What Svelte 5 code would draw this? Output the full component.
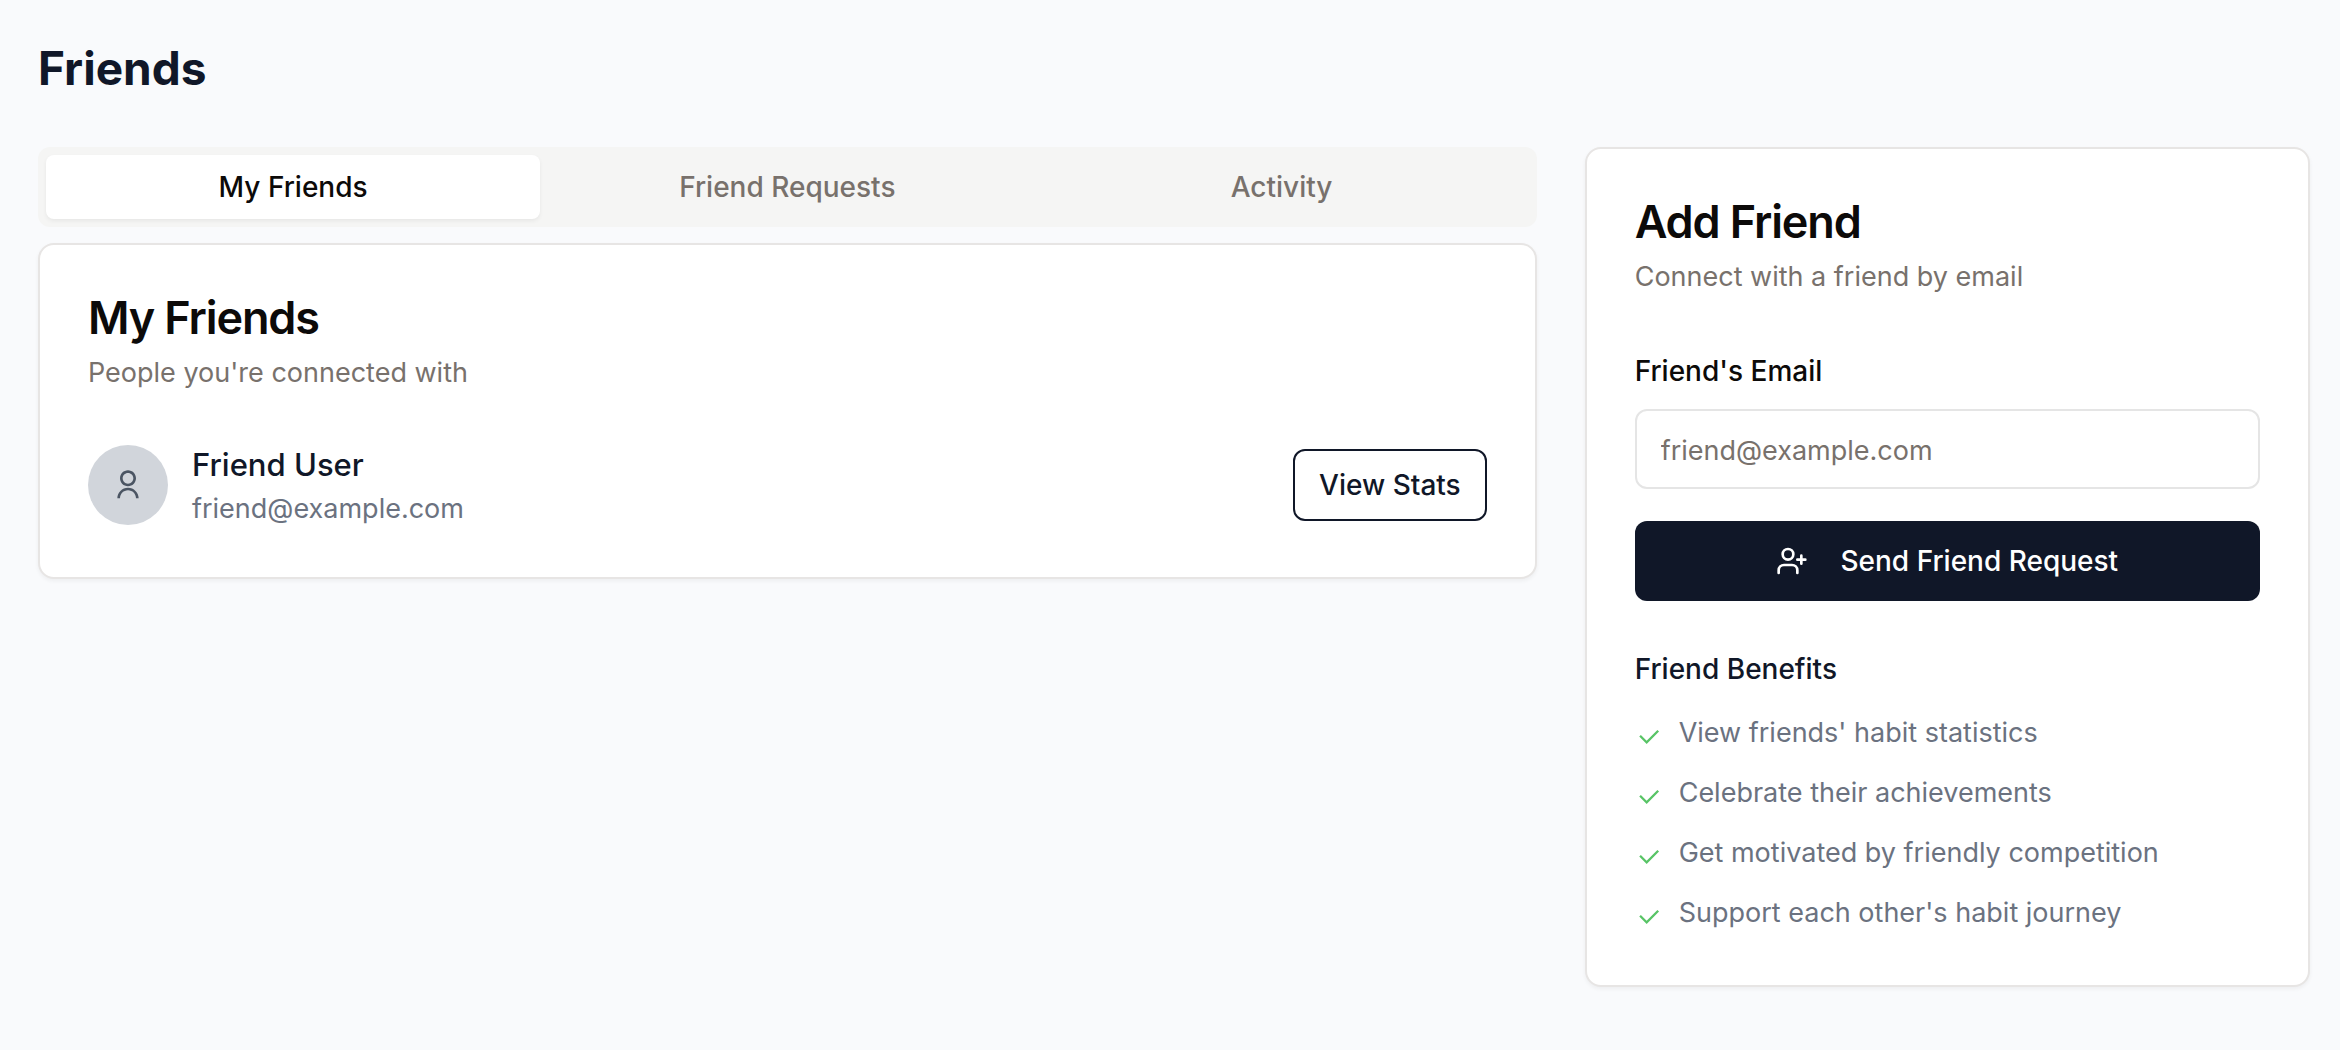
<script>
  const tabs = ['My Friends', 'Friend Requests', 'Activity'];
  const friends = [{ name: 'Friend User', email: 'friend@example.com' }];
  const benefits = [
    "View friends' habit statistics",
    'Celebrate their achievements',
    'Get motivated by friendly competition',
    "Support each other's habit journey"
  ];

  let active = $state('My Friends');
  let email = $state('');
</script>

<main class="page">
  <h1>Friends</h1>

  <div class="columns">
    <section class="primary">
      <div class="tabs" role="tablist">
        {#each tabs as tab}
          <button
            class="tab"
            class:active={tab === active}
            type="button"
            role="tab"
            aria-selected={tab === active}
            onclick={() => (active = tab)}>{tab}</button>
        {/each}
      </div>

      <div class="card">
        <header class="card-header">
          <h2>My Friends</h2>
          <p>People you're connected with</p>
        </header>
        <ul class="friends">
          {#each friends as friend}
            <li class="friend">
              <span class="avatar">
                <svg viewBox="0 0 24 24" fill="currentColor" aria-hidden="true">
                  <path d="M4 22C4 17.5817 7.58172 14 12 14C16.4183 14 20 17.5817 20 22H18C18 18.6863 15.3137 16 12 16C8.68629 16 6 18.6863 6 22H4ZM12 13C8.685 13 6 10.315 6 7C6 3.685 8.685 1 12 1C15.315 1 18 3.685 18 7C18 10.315 15.315 13 12 13ZM12 11C14.21 11 16 9.21 16 7C16 4.79 14.21 3 12 3C9.79 3 8 4.79 8 7C8 9.21 9.79 11 12 11Z" />
                </svg>
              </span>
              <div class="who">
                <p class="name">{friend.name}</p>
                <p class="email">{friend.email}</p>
              </div>
              <button class="outline" type="button">View Stats</button>
            </li>
          {/each}
        </ul>
      </div>
    </section>

    <aside class="card">
      <header class="card-header">
        <h2>Add Friend</h2>
        <p>Connect with a friend by email</p>
      </header>
      <form class="form" onsubmit={(e) => e.preventDefault()}>
        <div class="field">
          <label for="friend-email">Friend's Email</label>
          <input id="friend-email" type="email" placeholder="friend@example.com" bind:value={email} />
        </div>
        <button class="solid" type="submit">
          <svg viewBox="0 0 24 24" fill="none" stroke="currentColor" stroke-width="2" stroke-linecap="round" stroke-linejoin="round" aria-hidden="true">
            <path d="M16 21v-2a4 4 0 0 0-4-4H6a4 4 0 0 0-4 4v2" />
            <circle cx="9" cy="7" r="4" />
            <path d="M19 8v6M22 11h-6" />
          </svg>
          Send Friend Request
        </button>
      </form>
      <h3>Friend Benefits</h3>
      <ul class="benefits">
        {#each benefits as benefit}
          <li>
            <svg viewBox="0 0 24 24" fill="currentColor" aria-hidden="true">
              <path d="M9.9997 15.1709L19.1921 5.97852L20.6063 7.39273L9.9997 17.9993L3.63574 11.6354L5.04996 10.2212L9.9997 15.1709Z" />
            </svg>
            <span>{benefit}</span>
          </li>
        {/each}
      </ul>
    </aside>
  </div>
</main>

<style>
  :global(body) {
    margin: 0;
    background: #f9fafc;
  }

  .page,
  .page * {
    box-sizing: border-box;
  }

  .page {
    padding: 35px 30px 48px 38px;
    font-family: Inter, 'Liberation Sans', sans-serif;
    font-size: 27px;
    line-height: 40px;
    color: #0c0a09;
  }

  h1,
  h2,
  h3,
  p,
  ul {
    margin: 0;
    padding: 0;
  }

  ul {
    list-style: none;
  }

  svg {
    display: block;
    flex-shrink: 0;
  }

  button,
  input {
    font: inherit;
  }

  button {
    cursor: pointer;
  }

  h1 {
    margin-bottom: 46px;
    font-size: 46px;
    font-weight: 700;
    line-height: 66px;
    color: #101728;
  }

  .columns {
    display: grid;
    grid-template-columns: repeat(3, minmax(0, 1fr));
    gap: 48px;
    align-items: start;
  }

  .primary {
    grid-column: span 2;
    display: flex;
    flex-direction: column;
    gap: 16px;
  }

  .tabs {
    display: grid;
    grid-template-columns: repeat(3, minmax(0, 1fr));
    padding: 8px;
    border-radius: 12px;
    background: #f5f5f4;
  }

  .tab {
    padding: 12px 24px;
    border: 0;
    border-radius: 8px;
    background: transparent;
    font-size: 28px;
    font-weight: 500;
    color: #78716c;
  }

  .tab.active {
    background: #fff;
    color: #0c0a09;
    box-shadow: 0 2px 4px rgb(0 0 0 / 0.06);
  }

  .card {
    padding: 48px;
    border: 2px solid #e7e5e4;
    border-radius: 16px;
    background: #fff;
    box-shadow: 0 2px 4px rgb(0 0 0 / 0.05);
  }

  .card-header {
    display: flex;
    flex-direction: column;
    gap: 10px;
    margin-bottom: 48px;
    color: #78716c;
  }

  h2 {
    font-size: 45px;
    font-weight: 600;
    line-height: 50px;
    letter-spacing: -0.025em;
    color: #0c0a09;
  }

  .friend {
    display: flex;
    align-items: center;
    gap: 24px;
  }

  .avatar {
    display: flex;
    align-items: center;
    justify-content: center;
    width: 80px;
    height: 80px;
    border-radius: 50%;
    background: #d1d5db;
    color: #4b5563;
  }

  .avatar svg,
  .solid svg {
    width: 32px;
    height: 32px;
  }

  .who {
    flex: 1;
  }

  .name {
    font-size: 31px;
    font-weight: 500;
    line-height: 48px;
    color: #101728;
  }

  .email {
    color: #6b7280;
  }

  .outline {
    padding: 14px 24px;
    border: 2px solid #101728;
    border-radius: 12px;
    background: #fff;
    font-size: 28px;
    font-weight: 500;
    color: #101728;
  }

  .form {
    display: flex;
    flex-direction: column;
    gap: 32px;
    margin-bottom: 48px;
  }

  .field {
    display: flex;
    flex-direction: column;
    gap: 12px;
  }

  label {
    font-size: 28px;
    font-weight: 500;
    line-height: 52px;
  }

  input {
    width: 100%;
    height: 80px;
    padding: 2px 24px 0;
    border: 2px solid #e5e5e5;
    border-radius: 12px;
    background: #fff;
    color: #0c0a09;
  }

  input::placeholder {
    color: #78716c;
    opacity: 1;
  }

  .solid {
    display: flex;
    align-items: center;
    justify-content: center;
    gap: 32px;
    padding: 20px 32px;
    border: 0;
    border-radius: 12px;
    background: #101728;
    font-size: 28px;
    font-weight: 500;
    color: #fff;
  }

  h3 {
    margin-bottom: 24px;
    font-size: 28px;
    font-weight: 500;
    line-height: 40px;
    color: #101728;
  }

  .benefits {
    display: flex;
    flex-direction: column;
    gap: 16px;
    color: #6b7280;
  }

  .benefits li {
    display: flex;
    gap: 16px;
    min-height: 44px;
  }

  .benefits svg {
    width: 28px;
    height: 28px;
    margin-top: 10px;
    color: #58c466;
  }
</style>
